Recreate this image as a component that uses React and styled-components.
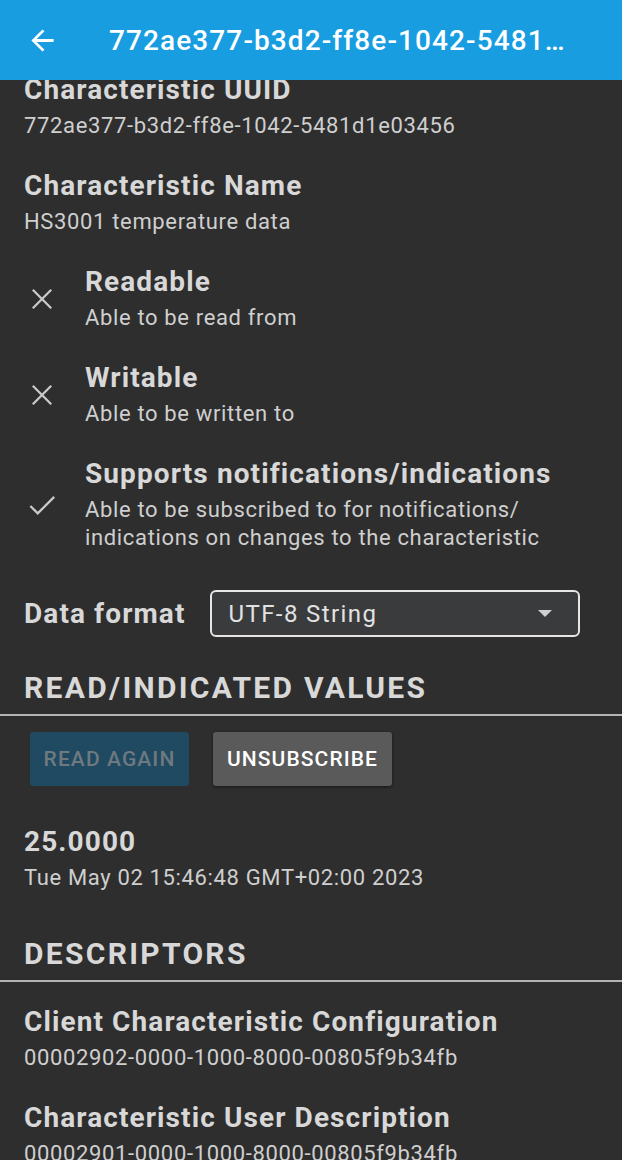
import React from "react";
import styled, { createGlobalStyle } from "styled-components";

const Global = createGlobalStyle`
  html, body { margin: 0; padding: 0; background: #2e2e2e; }
  body { font-family: Roboto, "Noto Sans", "Liberation Sans", sans-serif; }
  * { box-sizing: border-box; }
`;

const Screen = styled.div`
  width: 622px;
  height: 1160px;
  display: flex;
  flex-direction: column;
  overflow: hidden;
  background: #2e2e2e;
`;

const AppBar = styled.header`
  flex: 0 0 80px;
  height: 80px;
  background: #189de1;
  display: flex;
  align-items: center;
  padding-left: 24px;
  gap: 48px;
  position: relative;
  z-index: 2;
`;

const BarTitle = styled.h1`
  margin: 0;
  color: #ffffff;
  font-size: 28px;
  font-weight: 500;
  letter-spacing: 1.1px;
  white-space: nowrap;
`;

const Viewport = styled.main`
  flex: 1;
  overflow: hidden;
`;

const Scroll = styled.div`
  margin-top: -22px;
  display: flex;
  flex-direction: column;
`;

const InfoItem = styled.div`
  padding: 16px 24px 14px;
  display: flex;
  flex-direction: column;
  gap: 6px;
`;

const Title = styled.div`
  font-size: 28px;
  line-height: 32px;
  font-weight: 700;
  letter-spacing: 1.1px;
  color: #d8d8d8;
  white-space: nowrap;
`;

const Sub = styled.div`
  font-size: 22px;
  line-height: 28px;
  font-weight: 400;
  letter-spacing: 0.65px;
  color: #cfcfcf;
  white-space: nowrap;
`;

const PropItem = styled.div`
  padding: 16px 24px 14px 25px;
  display: flex;
  align-items: center;
  gap: 26px;
`;

const PropIcon = styled.svg`
  width: 34px;
  height: 34px;
  flex: 0 0 34px;
  color: #c9c9c9;
`;

const PropText = styled.div`
  display: flex;
  flex-direction: column;
  gap: 6px;
`;

const FormatRow = styled.div`
  padding: 24px 42px 0 24px;
  display: flex;
  align-items: center;
  gap: 24px;
`;

const FormatLabel = styled.div`
  font-size: 28px;
  font-weight: 700;
  letter-spacing: 1.1px;
  color: #d8d8d8;
  white-space: nowrap;
`;

const Select = styled.div`
  flex: 1;
  height: 47px;
  border: 2px solid #e6e6e6;
  border-radius: 6px;
  background: #3a3b3c;
  display: flex;
  align-items: center;
  justify-content: space-between;
  padding: 0 26px 0 17px;
  color: #e2e2e2;
  font-size: 24px;
  letter-spacing: 1.4px;
`;

const Caret = styled.span`
  width: 0;
  height: 0;
  border-left: 7px solid transparent;
  border-right: 7px solid transparent;
  border-top: 7px solid #d0d0d0;
`;

const SectionHeader = styled.div`
  margin-top: ${(p) => p.$top}px;
  display: flex;
  flex-direction: column;
`;

const SectionTitle = styled.h2`
  margin: 0;
  padding: 0 24px 9px;
  font-size: 30px;
  line-height: 34px;
  font-weight: 700;
  letter-spacing: 2.3px;
  color: #d8d8d8;
`;

const Divider = styled.hr`
  margin: 0;
  border: 0;
  height: 2px;
  background: #b4b4b4;
`;

const ButtonRow = styled.div`
  padding: 16px 30px 24px;
  display: flex;
  gap: 24px;
`;

const Button = styled.button`
  height: 54px;
  padding: 0 10px;
  min-width: ${(p) => p.$w}px;
  border: 0;
  border-radius: 3px;
  font-family: inherit;
  font-size: 21px;
  font-weight: 500;
  letter-spacing: 1.1px;
  background: ${(p) => (p.$disabled ? "#1f4a62" : "#5a5a5a")};
  color: ${(p) => (p.$disabled ? "#6e7980" : "#ffffff")};
  box-shadow: ${(p) => (p.$disabled ? "none" : "0 1px 3px rgba(0,0,0,0.5)")};
`;

const Spacer = styled.div`
  height: ${(p) => p.$h}px;
`;

const CloseIcon = () => (
  <PropIcon viewBox="0 0 24 24">
    <path d="M5.5 5.5 L18.5 18.5 M18.5 5.5 L5.5 18.5" stroke="currentColor" strokeWidth="1.6" fill="none" />
  </PropIcon>
);

const CheckIcon = () => (
  <PropIcon viewBox="0 0 24 24">
    <path d="M3.8 12.7 L9 17.9 L20.6 6.3" stroke="currentColor" strokeWidth="1.6" fill="none" />
  </PropIcon>
);

const BackArrow = () => (
  <svg width="37" height="37" viewBox="0 0 24 24">
    <path d="M20 11H7.83l5.59-5.59L12 4l-8 8 8 8 1.41-1.41L7.83 13H20v-2z" fill="#fff" transform="translate(12 12) scale(0.9) translate(-12 -12)" />
  </svg>
);

const Info = ({ title, sub }) => (
  <InfoItem>
    <Title>{title}</Title>
    <Sub>{sub}</Sub>
  </InfoItem>
);

const Prop = ({ ok, title, children }) => (
  <PropItem>
    {ok ? <CheckIcon /> : <CloseIcon />}
    <PropText>
      <Title>{title}</Title>
      <Sub>{children}</Sub>
    </PropText>
  </PropItem>
);

export default function App() {
  return (
    <>
      <Global />
      <Screen>
        <AppBar>
          <BackArrow />
          <BarTitle>772ae377-b3d2-ff8e-1042-5481…</BarTitle>
        </AppBar>
        <Viewport>
          <Scroll>
            <Info title="Characteristic UUID" sub="772ae377-b3d2-ff8e-1042-5481d1e03456" />
            <Info title="Characteristic Name" sub="HS3001 temperature data" />
            <Prop title="Readable">Able to be read from</Prop>
            <Prop title="Writable">Able to be written to</Prop>
            <Prop ok title="Supports notifications/indications">
              Able to be subscribed to for notifications/
              <br />
              indications on changes to the characteristic
            </Prop>
            <FormatRow>
              <FormatLabel>Data format</FormatLabel>
              <Select>
                <span>UTF-8 String</span>
                <Caret />
              </Select>
            </FormatRow>
            <SectionHeader $top={34}>
              <SectionTitle>READ/INDICATED VALUES</SectionTitle>
              <Divider />
            </SectionHeader>
            <ButtonRow>
              <Button $disabled $w={159}>READ AGAIN</Button>
              <Button $w={179}>UNSUBSCRIBE</Button>
            </ButtonRow>
            <Info title="25.0000" sub="Tue May 02 15:46:48 GMT+02:00 2023" />
            <SectionHeader $top={31}>
              <SectionTitle>DESCRIPTORS</SectionTitle>
              <Divider />
            </SectionHeader>
            <Spacer $h={8} />
            <Info title="Client Characteristic Configuration" sub="00002902-0000-1000-8000-00805f9b34fb" />
            <Info title="Characteristic User Description" sub="00002901-0000-1000-8000-00805f9b34fb" />
          </Scroll>
        </Viewport>
      </Screen>
    </>
  );
}
